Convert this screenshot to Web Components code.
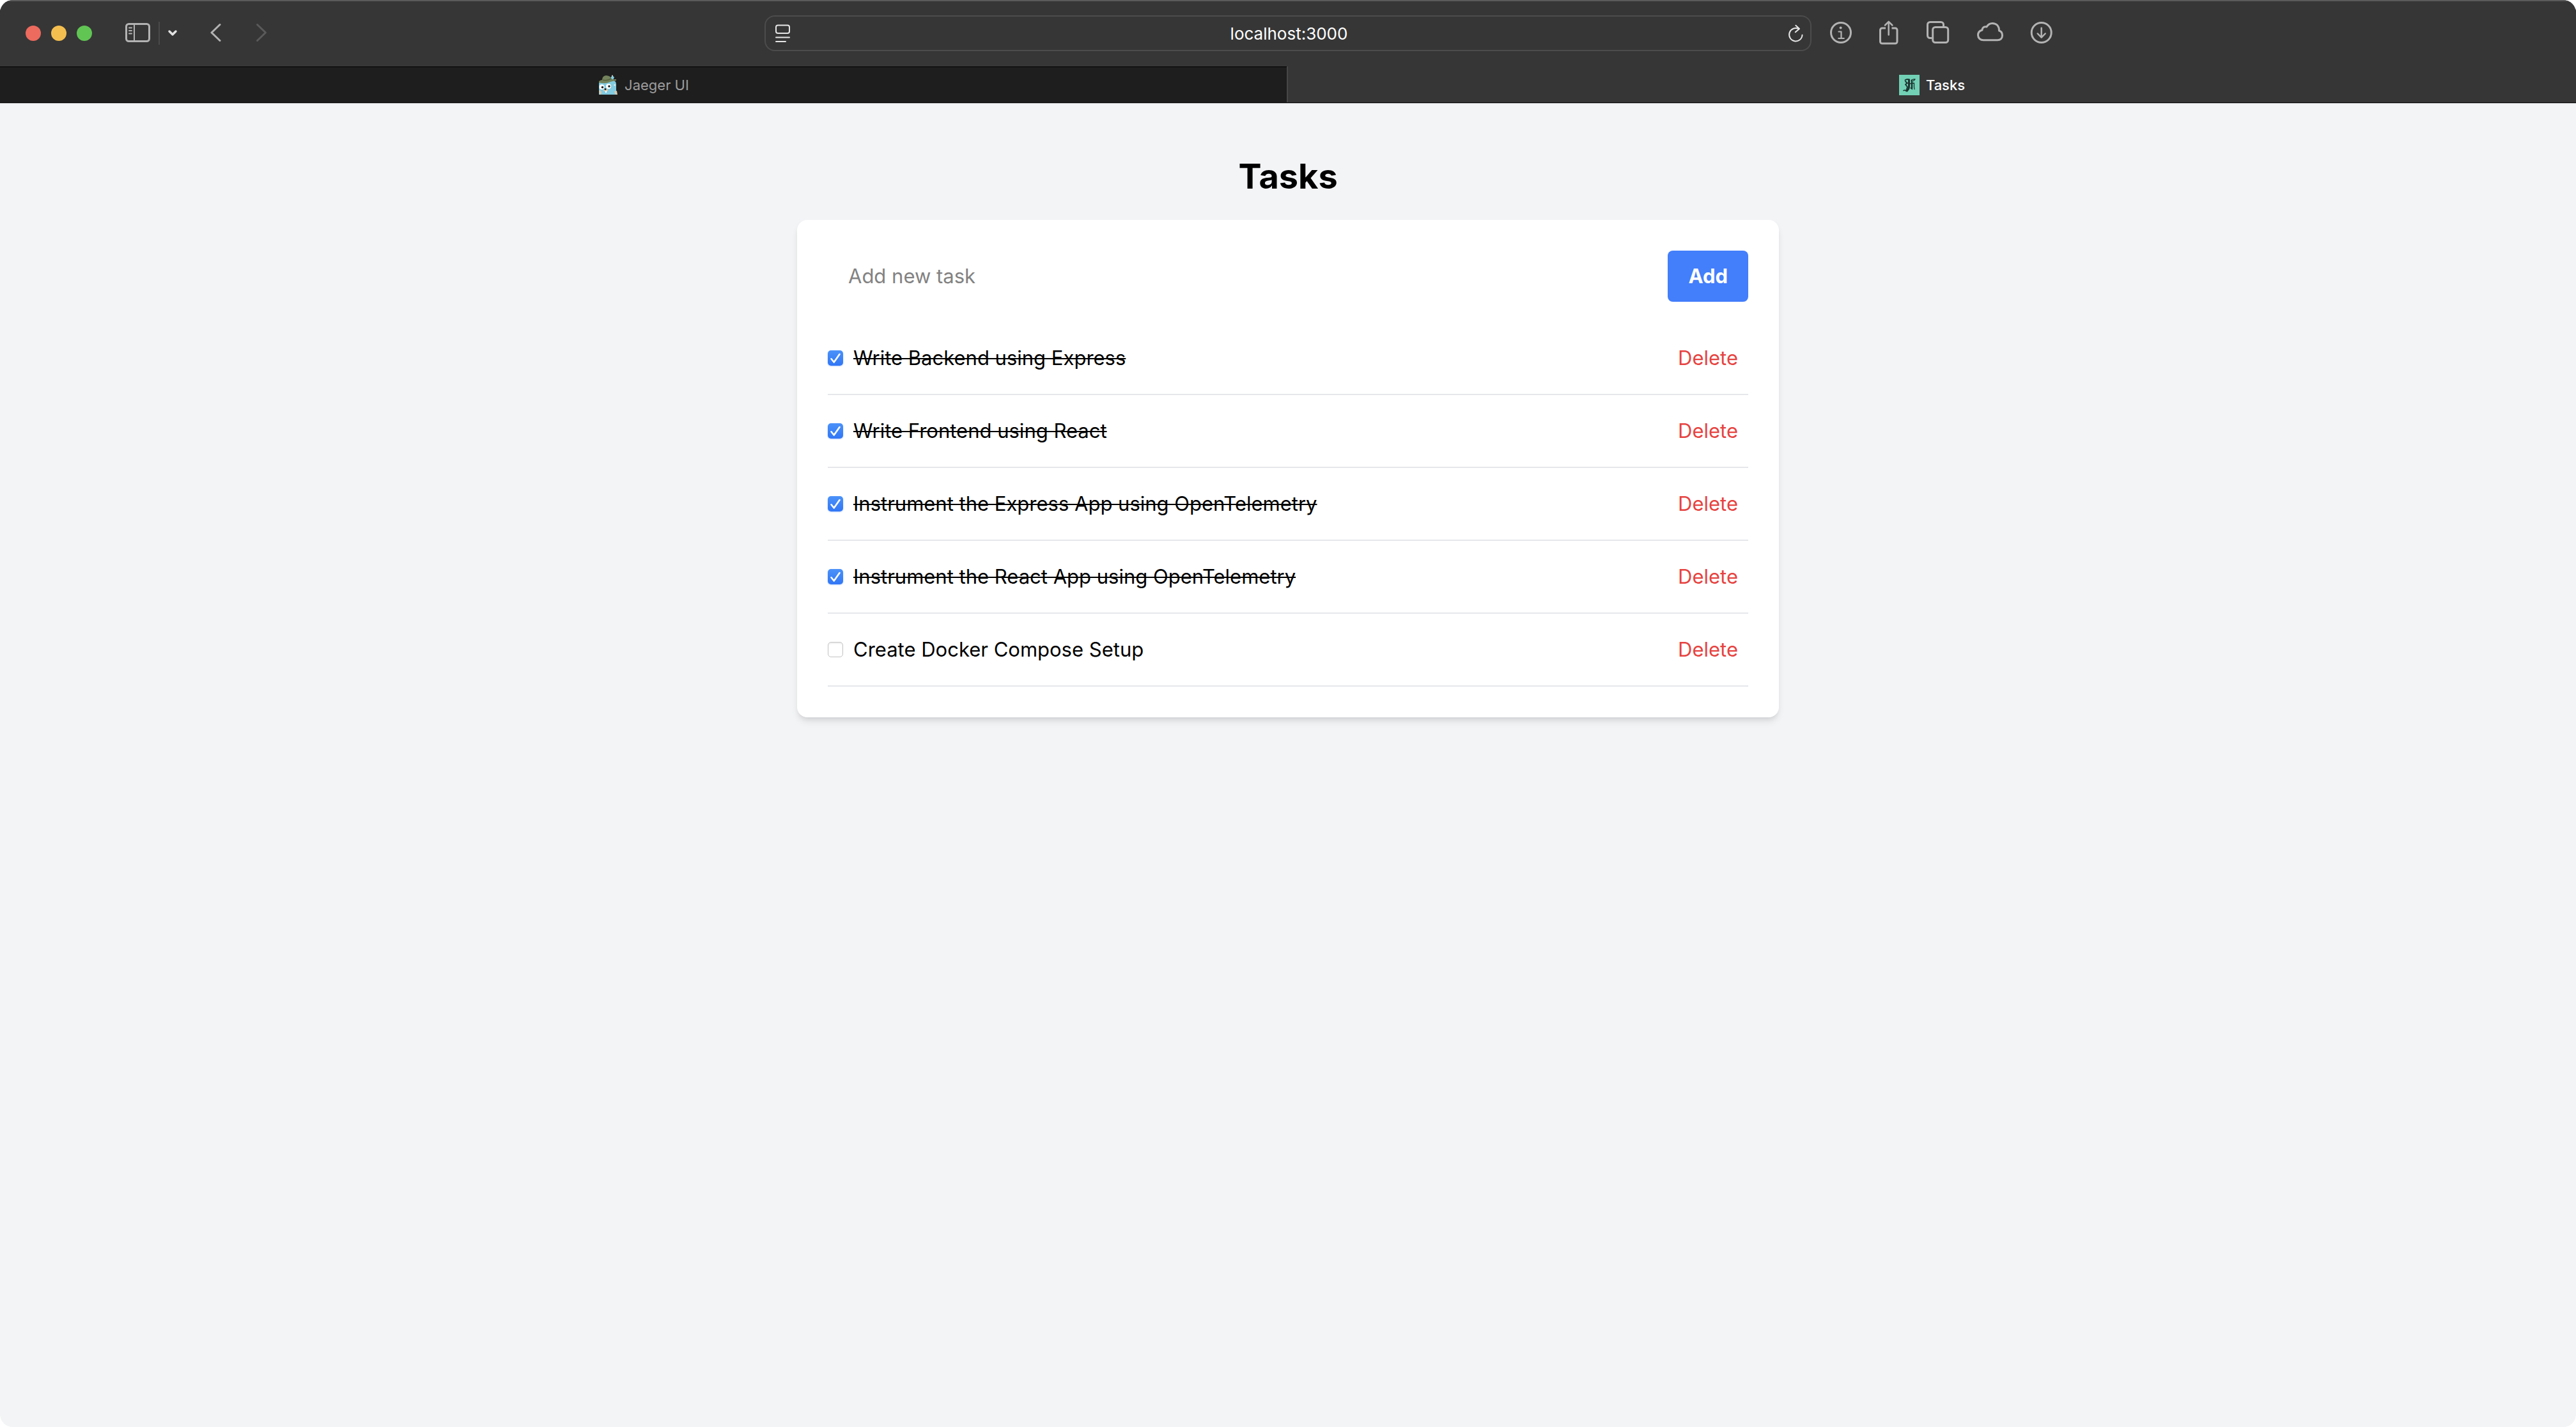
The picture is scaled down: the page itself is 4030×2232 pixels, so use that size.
<!DOCTYPE html>
<html lang="en">
<head>
<meta charset="utf-8">
<title>Tasks</title>
<style>
  html { background: #fff; }
  body { margin: 0; font-family: Inter, "Liberation Sans", sans-serif; color: #000; }
</style>
</head>
<body>
<browser-window>
  <browser-toolbar slot="chrome"></browser-toolbar>
  <tab-bar slot="chrome">
    <browser-tab label="Jaeger UI">
      <svg slot="icon" width="32" height="32" viewBox="0 0 32 32" aria-hidden="true">
        <path d="M2 31V14q0-4 5-5h18q4 1 4 6v16z" fill="#82cbe0"/>
        <path d="M2 25l2-1 2 3-1 4H3zM26 26l4-1 1 6h-3z" fill="#d9c9ae"/>
        <path d="M20 5l3-4 3 3-2 4z" fill="#82cbe0"/><circle cx="23" cy="1.500" r="1" fill="#ddd"/>
        <path d="M2 10q3-2 5-2 0-6 6-7 7 0 9 6l7 0v2q-6 1-9 2-8 4-18 1z" fill="#74835b"/>
        <path d="M8 8q6 2 13-2" fill="none" stroke="#56633f" stroke-width="1.500"/>
        <circle cx="6.500" cy="19" r="4" fill="#fff"/><circle cx="17" cy="18" r="4" fill="#fff"/>
        <circle cx="7.500" cy="19.500" r="1.800" fill="#222"/><circle cx="18" cy="18" r="1.800" fill="#222"/>
        <ellipse cx="12.500" cy="24" rx="3.500" ry="2" fill="#e3cfae"/><circle cx="12" cy="22.500" r="1.500" fill="#222"/>
        <path d="M12 25h2v3h-2z" fill="#fff"/><circle cx="26.500" cy="16" r="1.200" fill="#eee"/>
      </svg>
    </browser-tab>
    <browser-tab label="Tasks" active>
      <svg slot="icon" width="32" height="32" viewBox="0 0 32 32" aria-hidden="true">
        <rect width="32" height="32" fill="#72d1b5"/>
        <g fill="none" stroke="#1d3531" stroke-linecap="round" stroke-linejoin="round">
          <path d="M9.500 8.500Q12 6 16 7.500" stroke-width="2"/>
          <path d="M10 10.500l3 2.500-3 2 3 4-1 4" stroke-width="2"/>
          <path d="M15.500 8v10q0 5-4 7" stroke-width="3"/>
          <path d="M7 24.500q4-1 6 1" stroke-width="1.800"/>
          <path d="M20 9v12" stroke-width="2.500"/>
          <path d="M19 8.500q3-2 6-1.500l-2.500 2.500M16 14l7.500-1v6l.5 3.500M18 20.500l2.500 2" stroke-width="1.300"/>
        </g>
      </svg>
    </browser-tab>
  </tab-bar>
  <task-app>
    <task-item done>Write Backend using Express</task-item>
    <task-item done>Write Frontend using React</task-item>
    <task-item done>Instrument the Express App using OpenTelemetry</task-item>
    <task-item done>Instrument the React App using OpenTelemetry</task-item>
    <task-item>Create Docker Compose Setup</task-item>
  </task-app>
</browser-window>

<script>
const define = (name, html, init) => {
  const template = document.createElement('template');
  template.innerHTML = html;
  customElements.define(name, class extends HTMLElement {
    constructor() {
      super();
      this.attachShadow({ mode: 'open' }).append(template.content.cloneNode(true));
    }
    connectedCallback() { if (init) init(this, this.shadowRoot); }
  });
};

define('browser-window', `
  <style>
    :host { display: flex; flex-direction: column; min-height: 100vh; border-radius: 20px; overflow: hidden; background: #f3f4f6; }
    header { background: #363636; box-shadow: 0 1px #000, 0 2px #a9aaab; }
    main { flex: 1; }
  </style>
  <header><slot name="chrome"></slot></header>
  <main><slot></slot></main>`);

define('browser-toolbar', `
  <style>
    :host { display: grid; grid-template-columns: 1fr minmax(0, 1638px) 1fr; align-items: center; height: 104px; box-shadow: inset 0 2px #5a5a5a; }
    .group { display: flex; align-items: center; }
    button { display: block; border: 0; padding: 0; background: none; color: #b3b3b3; }
    button:disabled { color: #5a5a5a; }
    svg { display: block; fill: none; stroke: currentColor; stroke-width: 3; stroke-linecap: round; stroke-linejoin: round; }
    .lights { display: flex; gap: 16px; padding-left: 40px; margin-right: 52px; }
    .lights button { width: 24px; height: 24px; border-radius: 50%; }
    .close { background: #ed6a5e; } .min { background: #f5bf4f; } .max { background: #61c554; }
    .sidebar { display: flex; align-items: center; gap: 12px; margin-right: 50px; }
    .sidebar i { width: 2px; height: 36px; background: #4a4a4a; }
    .sidebar .menu { color: #e2e2e2; }
    .nav { display: flex; gap: 54px; }
    .address { display: flex; align-items: center; box-sizing: border-box; height: 56px; padding: 0 8px 0 15px; border: 2px solid #4c4c4c; border-radius: 16px; }
    .address button { color: #e6e6e6; }
    .address svg { stroke-width: 2; }
    input { flex: 1; min-width: 0; padding: 2px 0 0; border: 0; outline: 0; background: none; color: #fff; font: 26px/32px Inter, "Liberation Sans", sans-serif; text-align: center; }
    .actions { gap: 42px; padding-left: 28px; }
  </style>
  <div class="group">
    <div class="lights">
      <button class="close" aria-label="Close"></button>
      <button class="min" aria-label="Minimise"></button>
      <button class="max" aria-label="Zoom"></button>
    </div>
    <div class="sidebar">
      <button aria-label="Sidebar"><svg width="40" height="40"><rect x="1.500" y="5.500" width="36" height="27" rx="4"/><path d="M14 6v26M6 11.500h4M6 16h4M6 20.500h4" stroke-width="2"/></svg></button>
      <i></i>
      <button class="menu" aria-label="Tab groups"><svg width="16" height="40"><path d="M3 17l5 5 5-5" stroke-width="3.500"/></svg></button>
    </div>
    <div class="nav">
      <button aria-label="Back"><svg width="18" height="40"><path d="M16 6.500L3 19l13 12.500"/></svg></button>
      <button aria-label="Forward" disabled><svg width="18" height="40"><path d="M2.500 6.500l13 12.500-13 12.500"/></svg></button>
    </div>
  </div>
  <div class="address">
    <button aria-label="Page menu"><svg width="24" height="40"><rect x="1" y="7.500" width="21" height="12.500" rx="3"/><path d="M1 26.500h21M1 33h15"/></svg></button>
    <input type="text" aria-label="Address" value="localhost:3000">
    <button aria-label="Reload"><svg width="28" height="40"><path d="M23.500 22.700A10.200 10.200 0 1 1 18 13.200M13.300 7.800L19 13l-6.200 5.300"/></svg></button>
  </div>
  <div class="group actions">
    <button aria-label="Info"><svg width="36" height="40"><circle cx="18" cy="19" r="15.500"/><circle cx="17.600" cy="11.600" r="2" fill="currentColor" stroke="none"/><path d="M14.500 17.500h4V28M14.300 28h8.500" stroke-width="2.200"/></svg></button>
    <button aria-label="Share"><svg width="32" height="40"><path d="M10 12H4.500a3 3 0 0 0-3 3v18a3 3 0 0 0 3 3H25a3 3 0 0 0 3-3V15a3 3 0 0 0-3-3h-5.500" stroke-linecap="butt"/><path d="M14.700 22.500V2M9 7.500L14.700 1.800l5.700 5.700" stroke-width="2.500"/></svg></button>
    <button aria-label="Tabs"><svg width="36" height="40"><rect x="9.700" y="10.500" width="24" height="24" rx="4"/><path d="M8.500 27.500H5.500a4 4 0 0 1-4-4V6.500a4 4 0 0 1 4-4h17a4 4 0 0 1 4 4V9" stroke-linecap="butt"/></svg></button>
    <button aria-label="Cloud tabs"><svg width="42" height="40"><path d="M11 30.700C6 30.700 2.500 27.500 2.500 23c0-4 2.500-7 6.500-8 0-3.500 3-6 7-5 2-3.500 5-5.500 9-5.500 6.500 0 10.500 4.500 10.500 11.500 3.500 1 5 4 5 7.500 0 4.500-3 7.200-7.500 7.200z"/></svg></button>
    <button aria-label="Downloads"><svg width="36" height="40"><circle cx="17.700" cy="19" r="15.500"/><path d="M17.700 11.800v14.500M11.700 20.500l6 6.200 6-6.200" stroke-width="2.500"/></svg></button>
  </div>`);

define('tab-bar', `
  <style>:host { display: grid; grid-template-columns: 1fr 1fr; height: 56px; }</style>
  <slot></slot>`);

define('browser-tab', `
  <style>
    :host { display: grid; background: #1e1e1e; box-shadow: inset 0 1px #000; border-right: 2px solid #474747; color: #9d9d9d; }
    :host([active]) { background: #363636; box-shadow: none; border: 0; color: #fff; font-weight: 500; }
    button { display: flex; justify-content: center; align-items: center; gap: 10px; border: 0; padding: 2px 0 0; background: none; color: inherit; font: inherit; font-size: 22px; line-height: 28px; }
    ::slotted(svg) { display: block; }
  </style>
  <button><slot name="icon"></slot><span></span></button>`,
  (host, root) => { root.querySelector('span').textContent = host.getAttribute('label'); });

define('task-app', `
  <style>
    :host { display: block; padding: 80px 32px; }
    h1 { margin: 0 0 32px; font-size: 54px; line-height: 72px; font-weight: 700; text-align: center; }
    section { box-sizing: border-box; max-width: 1536px; margin: 0 auto; padding: 48px; border-radius: 16px; background: #fff;
      box-shadow: 0 8px 12px -2px rgba(0,0,0,.1), 0 4px 8px -4px rgba(0,0,0,.1); }
    form { display: flex; margin-bottom: 32px; }
    input, button { font-family: inherit; font-size: 31px; line-height: 48px; border: 0; padding: 16px 32px; }
    input { flex: 1; min-width: 0; outline: 0; background: none; color: #000; }
    input::placeholder { color: #828282; opacity: 1; }
    button { border-radius: 8px; background: #437efb; color: #fff; font-weight: 700; }
  </style>
  <h1>Tasks</h1>
  <section>
    <form>
      <input type="text" placeholder="Add new task" aria-label="Add new task">
      <button type="button">Add</button>
    </form>
    <div role="list"><slot></slot></div>
  </section>`);

define('task-item', `
  <style>
    :host { display: flex; align-items: center; justify-content: space-between; padding: 32px 0; border-bottom: 2px solid #e5e7eb; font-size: 31px; line-height: 48px; }
    label { display: flex; align-items: center; gap: 16px; }
    input { appearance: none; box-sizing: border-box; width: 24px; height: 24px; margin: 0; border: 1px solid #c4c4c4; border-radius: 5px; background: #fff; box-shadow: inset 0 2px 2px #eee; }
    .box { display: grid; }
    .box > * { grid-area: 1 / 1; }
    .box svg { display: none; pointer-events: none; }
    input:checked { border: 0; background: linear-gradient(#4b92f9, #3176f6); box-shadow: 0 1px 2px #bcd3fb; }
    input:checked + svg { display: block; }
    :host([done]) .text { text-decoration: line-through; text-decoration-thickness: 2px; }
    button { border: 0; padding: 0 16px; background: none; color: #e64340; font: inherit; }
  </style>
  <label>
    <span class="box"><input type="checkbox"><svg width="24" height="24" fill="none" stroke="#fff" stroke-width="2.600" stroke-linecap="round" stroke-linejoin="round"><path d="M5.500 13.300l4.200 5.200L18.500 6"/></svg></span>
    <span class="text"><slot></slot></span>
  </label>
  <button type="button">Delete</button>`,
  (host, root) => {
    host.setAttribute('role', 'listitem');
    const box = root.querySelector('input');
    box.checked = host.hasAttribute('done');
    box.addEventListener('change', () => host.toggleAttribute('done', box.checked));
  });
</script>
</body>
</html>
